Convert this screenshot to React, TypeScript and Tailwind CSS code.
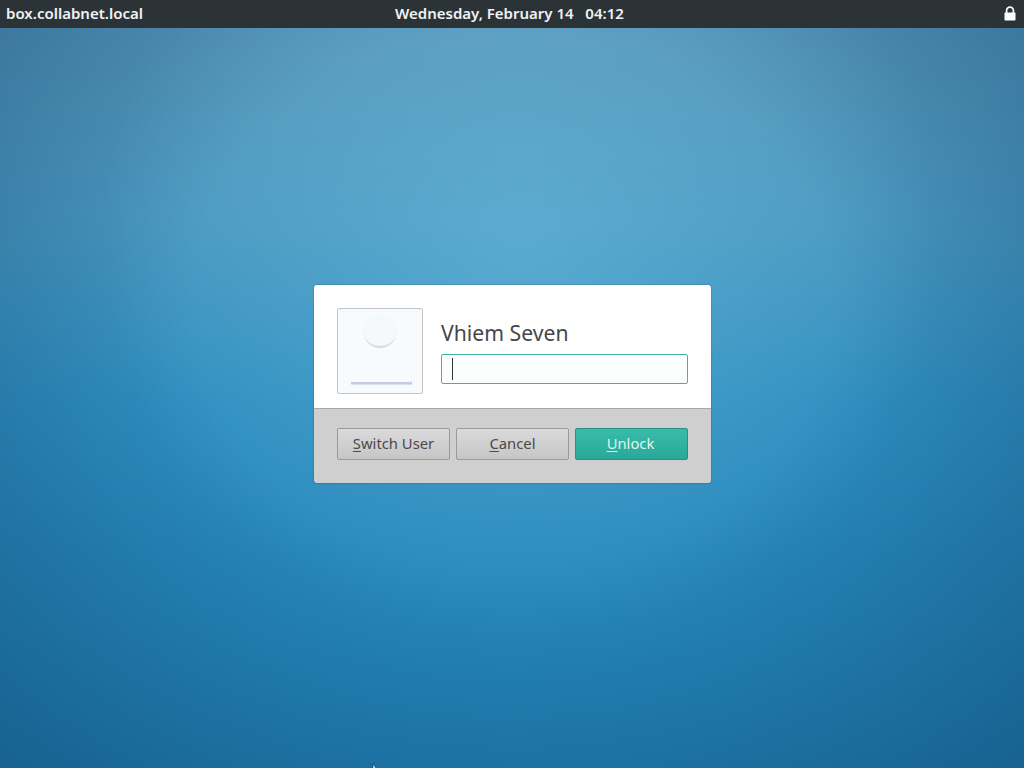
const Btn = ({ first, rest, primary }: { first: string; rest: string; primary?: boolean }) => (
  <button
    className={
      primary
        ? "h-8 w-[113px] rounded-[2px] border border-[#2a8f80] bg-gradient-to-b from-[#38bcaa] to-[#2ba898] pr-[2px] pb-px text-[14.8px] text-[#dff5f1]"
        : "h-8 w-[113px] rounded-[2px] border border-[#9a9a9a] bg-gradient-to-b from-[#dadada] to-[#c6c6c6] pb-px text-[14.8px] text-[#4a4a4a]"
    }
  >
    <span className="underline underline-offset-2">{first}</span>
    {rest}
  </button>
);

export default function App() {
  return (
    <div className="relative grid h-screen grid-rows-[28px_1fr_28px] overflow-hidden bg-[radial-gradient(ellipse_420px_400px_at_520px_240px,rgba(110,190,225,0.5)_0%,rgba(110,190,225,0)_100%),radial-gradient(ellipse_760px_640px_at_512px_300px,rgba(15,70,115,0)_42%,rgba(15,70,115,0.58)_100%),linear-gradient(to_bottom,#5a96b8_0%,#4b98bf_28%,#2f8fc0_52%,#2789bb_72%,#2286b8_100%)] font-['Noto_Sans',sans-serif]">
      <div className="flex items-center justify-between bg-[#2c3337] px-[6px] pb-px text-[15px] font-semibold text-[#eff3f5]">
        <span>box.collabnet.local</span>
        <span className="absolute left-[395px] whitespace-pre">Wednesday, February 14   04:12</span>
        <svg width="14" height="15" viewBox="0 0 14 15" className="mr-[1px]">
          <path
            d="M3.6 7V4.6a3.4 3.4 0 0 1 6.8 0V7"
            fill="none"
            stroke="#fff"
            strokeWidth="1.7"
          />
          <rect x="1.5" y="6.5" width="11" height="8" rx="0.8" fill="#fff" />
        </svg>
      </div>

      <div className="flex items-center justify-center pl-[1px]">
        <div className="w-[397px] overflow-hidden rounded-[3px] shadow-[0_0_2px_rgba(0,0,0,0.35)]">
          <div className="flex h-[123px] gap-[18px] bg-white px-[23px] pt-[23px]">
            <div className="flex h-[86px] w-[86px] flex-col rounded-[2px] border border-[#c4c4c4] bg-[#f7fbfe]">
              <div className="mt-[5px] ml-[25px] h-[34px] w-[34px] rounded-full border-b-2 border-[#d6dbde] bg-[#f5f9fb]" />
              <svg width="62" height="8" viewBox="0 0 62 8" className="mt-auto mb-[8px] ml-[13px]">
                <path d="M0 6.2H59" stroke="#c6cbe8" strokeWidth="2.4" />
                <path d="M58 7.4L61 3.5V7.4Z" fill="#c4cad0" />
              </svg>
            </div>
            <div className="flex flex-1 flex-col pt-[8px]">
              <div className="text-[21.2px] leading-[34px] text-[#45484a]">Vhiem Seven</div>
              <div className="mt-[4px] flex h-[30px] items-center rounded-[2px] border border-[#45b3a2] bg-[#fbfefd] pl-[10px]">
                <div className="h-[22px] w-px bg-[#333]" />
              </div>
            </div>
          </div>
          <div className="flex h-[75px] gap-[6px] border-t border-[#a9a9a9] bg-[#cfcfcf] px-[23px] pt-[19px]">
            <Btn first="S" rest="witch User" />
            <Btn first="C" rest="ancel" />
            <Btn first="U" rest="nlock" primary />
          </div>
        </div>
      </div>
      <div />

      <svg className="absolute left-[372px] top-[763px]" width="8" height="8" viewBox="0 0 8 8">
        <path d="M1 1 L1 8 L6 8 Z" fill="#e8f4f4" stroke="#123" strokeWidth="0.5" />
      </svg>
    </div>
  );
}
